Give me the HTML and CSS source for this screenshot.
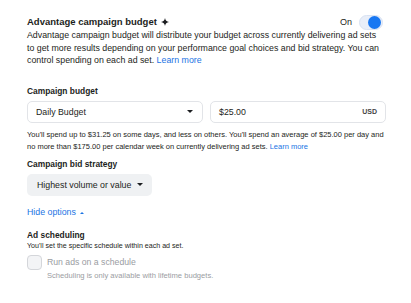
FILE: index.html
```html
<!DOCTYPE html>
<html lang="en">
<head>
  <meta charset="UTF-8">
  <meta name="viewport" content="width=device-width, initial-scale=1.0">
  <link rel="stylesheet" href="styles.css">
  <title>Advantage campaign budget</title>
</head>
<body>
  <div class="panel">
    <div class="titleRow">
      <div class="title">
        Advantage campaign budget
        <svg class="sparkle" width="8" height="8" viewBox="0 0 10 10"><path d="M5 0 Q5.6 4.4 10 5 Q5.6 5.6 5 10 Q4.4 5.6 0 5 Q4.4 4.4 5 0Z" fill="#1c1e21"/></svg>
      </div>
      <div class="toggleWrap">
        <span class="toggleLabel">On</span>
        <span class="toggle"><span class="knob"></span></span>
      </div>
    </div>
    <p class="desc">Advantage campaign budget will distribute your budget across currently delivering ad sets to get more results depending on your performance goal choices and bid strategy. You can control spending on each ad set. <a href="#">Learn more</a></p>

    <div class="label first">Campaign budget</div>
    <div class="budgetRow">
      <div class="field select">
        <span>Daily Budget</span>
        <span class="caret"></span>
      </div>
      <div class="field">
        <span>$25.00</span>
        <span class="currency">USD</span>
      </div>
    </div>
    <p class="helper">You'll spend up to $31.25 on some days, and less on others. You'll spend an average of $25.00 per day and no more than $175.00 per calendar week on currently delivering ad sets. <a href="#">Learn more</a></p>

    <div class="label bid">Campaign bid strategy</div>
    <div class="bidSelect">
      <span>Highest volume or value</span>
      <span class="caret"></span>
    </div>

    <a href="#" class="hideLink">Hide options <span class="caretUp"></span></a>

    <div class="label schedule">Ad scheduling</div>
    <div class="subText">You'll set the specific schedule within each ad set.</div>
    <div class="checkRow">
      <span class="checkbox"></span>
      <span class="checkText">Run ads on a schedule</span>
    </div>
    <div class="note">Scheduling is only available with lifetime budgets.</div>
  </div>
</body>
</html>
```

FILE: styles.css
```css
*{box-sizing: border-box;}
body
{
  margin: 0;
  background-color: #fff;
  font-family: "Liberation Sans", Arial, sans-serif;
  color: #1c1e21;
}
.panel
{
  padding: 14px 25px 0 27px;
}
.titleRow
{
  display: flex;
  justify-content: space-between;
  align-items: center;
  height: 14px;
  margin-top: 1px;
}
.title
{
  font-size: 9.5px;
  font-weight: bold;
  line-height: 14px;
}
.sparkle
{
  margin-left: 1px;
  vertical-align: -0.5px;
}
.toggleWrap
{
  display: flex;
  align-items: center;
  gap: 7px;
  margin-right: 3px;
}
.toggleLabel
{
  font-size: 9px;
}
.toggle
{
  display: flex;
  justify-content: flex-end;
  align-items: center;
  width: 24px;
  height: 15px;
  padding: 0 1px;
  border-radius: 8px;
  background-color: #e8eef9;
  border: 1px solid #d9e2f2;
}
.knob
{
  width: 13px;
  height: 13px;
  border-radius: 50%;
  background-color: #1877f2;
}
.desc
{
  margin: 0;
  padding-right: 6px;
  font-size: 8.8px;
  line-height: 12.6px;
}
a
{
  color: #1b74e4;
  text-decoration: none;
}
.label
{
  font-size: 8.4px;
  font-weight: bold;
  line-height: 12px;
}
.label.first
{
  margin-top: 18px;
}
.label.bid
{
  margin-top: 5px;
}
.label.schedule
{
  margin-top: 11px;
}
.budgetRow
{
  display: flex;
  gap: 7px;
  margin-top: 4px;
}
.field
{
  flex: 1;
  display: flex;
  justify-content: space-between;
  align-items: center;
  height: 22px;
  padding: 0 8px;
  border: 1px solid #e2e4e8;
  border-radius: 5px;
  font-size: 8.8px;
}
.caret
{
  width: 0;
  height: 0;
  margin-right: 1px;
  border-left: 3.5px solid transparent;
  border-right: 3.5px solid transparent;
  border-top: 3.5px solid #1c1e21;
}
.currency
{
  font-size: 7px;
  font-weight: bold;
  color: #444;
}
.helper
{
  margin: 6px 0 0;
  font-size: 7.5px;
  line-height: 12px;
}
.bidSelect
{
  display: inline-flex;
  align-items: center;
  gap: 6px;
  height: 22px;
  margin-top: 4px;
  padding: 0 8px 0 10px;
  border-radius: 5px;
  background-color: #eff1f3;
  font-size: 8.8px;
  white-space: nowrap;
}
.hideLink
{
  display: block;
  margin-top: 10px;
  font-size: 8.8px;
  line-height: 12px;
}
.caretUp
{
  display: inline-block;
  width: 0;
  height: 0;
  margin-left: 2px;
  vertical-align: 1px;
  border-left: 2.5px solid transparent;
  border-right: 2.5px solid transparent;
  border-bottom: 2.5px solid #1b74e4;
}
.subText
{
  font-size: 7.1px;
  line-height: 11px;
}
.checkRow
{
  display: flex;
  align-items: center;
  gap: 5px;
  margin-top: 3px;
}
.checkbox
{
  width: 15px;
  height: 15px;
  border-radius: 4px;
  border: 1px solid #d4d6da;
  background-color: #f3f4f6;
}
.checkText
{
  font-size: 8.7px;
  color: #9a9da2;
}
.note
{
  margin-left: 20px;
  font-size: 7.6px;
  line-height: 12px;
  color: #9a9da2;
}
```
